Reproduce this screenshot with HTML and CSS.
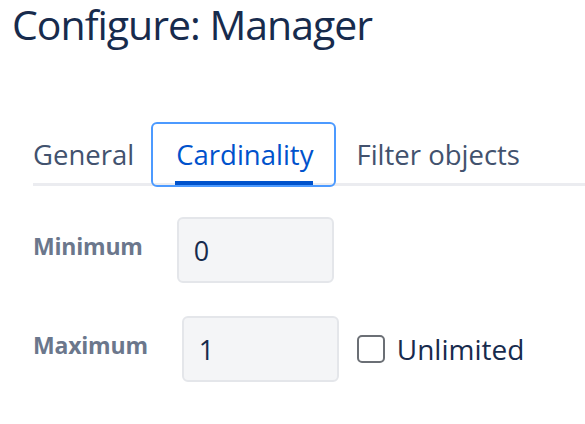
FILE: index.html
```html
<!DOCTYPE html>
<html>
<head>
<meta charset="utf-8">
<link rel="stylesheet" href="styles.css">
</head>
<body>
<h1 class="title">Configure: Manager</h1>
<div class="tabs">
  <div class="tab">General</div>
  <div class="tab tab-active">Cardinality</div>
  <div class="tab">Filter objects</div>
</div>
<div class="form">
  <div class="row">
    <label class="label">Minimum</label>
    <div class="input">0</div>
  </div>
  <div class="row row-max">
    <label class="label">Maximum</label>
    <div class="input">1</div>
    <div class="check">
      <span class="box"></span>
      <span class="check-label">Unlimited</span>
    </div>
  </div>
</div>
</body>
</html>
```
FILE: styles.css
```css
html, body {
  margin: 0;
  padding: 0;
  background: #ffffff;
  font-family: "Open Sans", "Noto Sans", sans-serif;
  color: #172b4d;
}
.title {
  margin: 0;
  padding: 1px 0 0 12px;
  font-size: 41px;
  font-weight: 400;
  line-height: 46px;
  color: #172b4d;
  letter-spacing: -1px;
}
.tabs {
  margin: 75px 0 0 33px;
  display: flex;
  align-items: flex-start;
  border-bottom: 3px solid #ebecf0;
  height: 61px;
}
.tab {
  font-size: 27.5px;
  line-height: 37px;
  color: #42526e;
  padding-top: 14px;
}
.tab-active {
  position: relative;
  margin: 0 20px 0 17px;
  padding: 12px 21px 0 23px;
  height: 49px;
  border: 2px solid #4c9aff;
  border-radius: 6px;
  color: #0052cc;
}
.tab-active::after {
  content: "";
  position: absolute;
  left: 22px;
  right: 21px;
  bottom: 0;
  height: 4px;
  background: #0052cc;
}
.form {
  padding-left: 33px;
  margin-top: 31px;
}
.row {
  display: flex;
  align-items: center;
  gap: 34px;
}
.row-max {
  margin-top: 33px;
}
.label {
  font-size: 23px;
  font-weight: 700;
  color: #6b778c;
  padding-bottom: 9px;
  letter-spacing: -0.2px;
}
.input {
  box-sizing: border-box;
  width: 157px;
  height: 66px;
  background: #f4f5f7;
  border: 2px solid #e4e6ea;
  border-radius: 6px;
  font-size: 27px;
  color: #172b4d;
  display: flex;
  align-items: center;
  padding-left: 15px;
}
.check {
  display: flex;
  align-items: center;
  margin-left: -16px;
}
.box {
  width: 28px;
  height: 28px;
  box-sizing: border-box;
  border: 2px solid #6b6f75;
  border-radius: 5px;
  margin-right: 12px;
}
.check-label {
  font-size: 28px;
  color: #172b4d;
}
```
